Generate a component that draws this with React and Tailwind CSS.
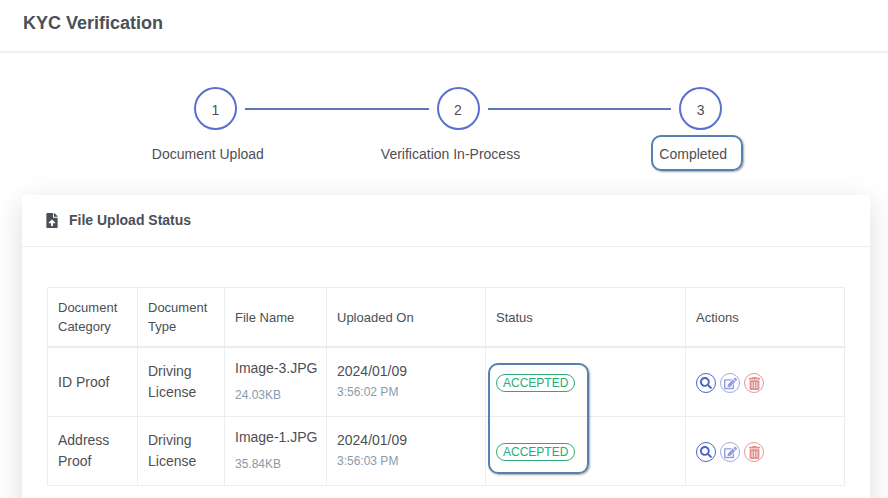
import { FaEdit, FaFileUpload, FaSearch, FaTrashAlt } from "react-icons/fa";

const steps = ["Document Upload", "Verification In-Process", "Completed"];

const files = [
  { category: "ID Proof", type: "Driving License", name: "Image-3.JPG", size: "24.03KB", date: "2024/01/09", time: "3:56:02 PM" },
  { category: "Address Proof", type: "Driving License", name: "Image-1.JPG", size: "35.84KB", date: "2024/01/09", time: "3:56:03 PM" },
];

const columns = [
  { label: "Document Category", width: "w-[90px]" },
  { label: "Document Type", width: "w-[87px]" },
  { label: "File Name", width: "w-[102px]" },
  { label: "Uploaded On", width: "w-[159px]" },
  { label: "Status", width: "w-[200px]" },
  { label: "Actions", width: "" },
];

const highlight =
  "pointer-events-none absolute rounded-[10px] border-2 border-[#5680ad] shadow-[1px_1px_2px_rgba(0,0,0,0.35)]";

function Connector({ visible }) {
  return <span className={visible ? "h-[2px] flex-1 bg-[#5f76b8]" : "h-[2px] flex-1"} />;
}

function Step({ label, index }) {
  const last = index === steps.length - 1;
  return (
    <li className="flex flex-1 flex-col">
      <div className="flex items-center">
        <Connector visible={index > 0} />
        <span className="mx-2 flex size-[43px] items-center justify-center rounded-full border-2 border-[#5a70cf] pt-[2px] text-sm">
          {index + 1}
        </span>
        <Connector visible={!last} />
      </div>
      <div className="mt-[14px] pr-[15px] text-center text-sm">
        <span className="relative inline-block whitespace-nowrap">
          {label}
          {last && <span className={`${highlight} -top-[9px] -right-4 -bottom-[7px] -left-2`} />}
        </span>
      </div>
    </li>
  );
}

function ActionButton({ label, className, children }) {
  return (
    <button type="button" aria-label={label} className={`flex size-5 items-center justify-center rounded-full border ${className}`}>
      {children}
    </button>
  );
}

export default function App() {
  return (
    <div className="flex h-screen flex-col overflow-hidden bg-white font-['Liberation_Sans',Arial,sans-serif] text-[#4e4f54]">
      <header className="border-b-2 border-[#efefef] px-[23px] pt-[9px] pb-[14px]">
        <h1 className="text-lg font-bold text-[#495057]">KYC Verification</h1>
      </header>

      <ol className="flex pt-[34px] pr-[66px] pl-[94px]">
        {steps.map((label, i) => (
          <Step key={label} label={label} index={i} />
        ))}
      </ol>

      <section className="mt-[31px] mr-[18px] -mb-10 ml-[22px] flex-1 rounded bg-white shadow-[0_8px_30px_rgba(0,0,0,0.14)]">
        <div className="flex items-center gap-[11px] border-b border-[#ebedef] px-6 py-[15px] text-[#495057]">
          <FaFileUpload className="h-[15px] w-3" />
          <h2 className="text-sm leading-[21px] font-bold">File Upload Status</h2>
        </div>
        <div className="px-[25px] pt-10">
          <table className="w-full table-fixed border-collapse text-sm leading-[21px]">
            <thead>
              <tr>
                {columns.map((c) => (
                  <th
                    key={c.label}
                    scope="col"
                    className={`border border-b-2 border-[#ebedef] p-[10px] text-left text-[13px] leading-[19px] font-normal text-[#495057] ${c.width}`}
                  >
                    {c.label}
                  </th>
                ))}
              </tr>
            </thead>
            <tbody className="[&_td]:border [&_td]:border-[#ebedef] [&_td]:p-[10px]">
              {files.map((f, i) => (
                <tr key={f.name}>
                  <td>{f.category}</td>
                  <td>{f.type}</td>
                  <td className="whitespace-nowrap">
                    <div>{f.name}</div>
                    <div className="mt-[6px] text-xs leading-[21px] text-[#8a99ad]">{f.size}</div>
                  </td>
                  <td>
                    <div>{f.date}</div>
                    <div className="text-xs leading-[21px] text-[#8a99ad]">{f.time}</div>
                  </td>
                  <td className="relative">
                    <span className="mt-[2px] flex h-[18px] w-fit items-center rounded-full border border-[#2fa877] px-[6px] text-xs text-[#25ad76]">
                      ACCEPTED
                    </span>
                    {i === 0 && <span className={`${highlight} top-[15px] left-[2px] h-[111px] w-[101px]`} />}
                  </td>
                  <td>
                    <div className="mt-[2px] flex gap-1">
                      <ActionButton label={`View ${f.name}`} className="border-[#4d64c4] text-[#4d64c4]">
                        <FaSearch className="size-3" />
                      </ActionButton>
                      <ActionButton label={`Edit ${f.name}`} className="border-[#a0abe2] text-[#949fe0]">
                        <FaEdit className="size-[13px]" />
                      </ActionButton>
                      <ActionButton label={`Delete ${f.name}`} className="border-[#e09a98] text-[#e18e8c]">
                        <FaTrashAlt className="size-[13px]" />
                      </ActionButton>
                    </div>
                  </td>
                </tr>
              ))}
            </tbody>
          </table>
        </div>
      </section>
    </div>
  );
}
